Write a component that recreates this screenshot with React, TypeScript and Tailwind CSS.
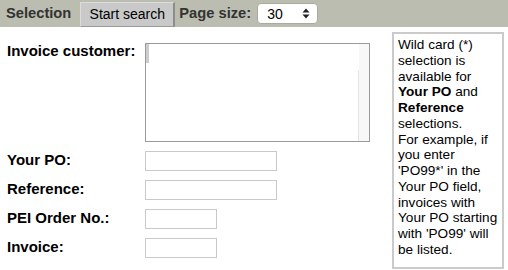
import React from "react";

export default function App() {
  return (
    <div className="w-[508px] h-[270px] bg-white overflow-hidden font-['Liberation_Sans',Arial,sans-serif] text-black">
      {/* header bar */}
      <div className="h-[27px] bg-[#babdb0] flex items-center">
        <span className="pl-[6px] text-[14.7px] leading-[17px] font-bold text-[#333]">Selection</span>
        <button className="ml-[9px] mt-[1px] h-[25px] w-[95px] bg-[#c9c9c9] border-t border-l border-[#dcdcdc] border-r-2 border-r-[#8c8c8c] border-b border-b-[#9a9a9a] text-[14px] leading-[16px] text-black flex items-center justify-center">
          Start search
        </button>
        <span className="ml-[4px] text-[14.7px] leading-[17px] font-bold text-[#333]">Page size:</span>
        <div className="ml-[6px] h-[21px] w-[61px] rounded-[4px] bg-white border border-[#a9ab9f] flex items-center pl-[9px] pr-[7px] text-[14px] text-black">
          <span className="flex-1 leading-[16px]">30</span>
          <svg width="8" height="11" viewBox="0 0 8 11" className="block">
            <polygon points="4,0.5 7.5,4.5 0.5,4.5" fill="#222" />
            <polygon points="0.5,6.5 7.5,6.5 4,10.5" fill="#222" />
          </svg>
        </div>
      </div>

      {/* main */}
      <div className="flex pt-[5px]">
        <div className="flex-1 pl-[7px] pt-[11px]">
          <div className="grid grid-cols-[138px_auto] gap-y-[9px] items-start">
            <span className="text-[15px] leading-[17px] font-bold -mt-[1px]">Invoice customer:</span>
            <div className="w-[225px] h-[99px] border border-[#9b9b9b] bg-white flex">
              <div className="w-[3px] h-[19px] bg-[#cdcdcd]" />
              <div className="flex-1" />
              <div className="w-[11px] flex flex-col bg-[#f8f8f8]">
                <div className="h-[26px] border-l border-white" />
                <div className="flex-1 border-l border-[#e4e4e4]" />
              </div>
            </div>

            <span className="text-[15px] leading-[17px] font-bold">Your PO:</span>
            <div className="w-[132px] h-[20px] border border-[#c9c9c9] bg-white" />

            <span className="text-[15px] leading-[17px] font-bold">Reference:</span>
            <div className="w-[132px] h-[20px] border border-[#c9c9c9] bg-white" />

            <span className="text-[15px] leading-[17px] font-bold">PEI Order No.:</span>
            <div className="w-[72px] h-[20px] border border-[#c9c9c9] bg-white" />

            <span className="text-[15px] leading-[17px] font-bold">Invoice:</span>
            <div className="w-[72px] h-[20px] border border-[#c9c9c9] bg-white" />
          </div>
        </div>

        <div className="w-[112px] mr-[4px] border-2 border-[#cacaca] pl-[4px] pr-[1px] pt-[3px] pb-[9px] text-[13.6px] leading-[15.75px] text-black">
          Wild card (*) selection is available for <b>Your PO</b> and <b>Reference</b> selections.
          <br />
          For example, if you enter 'PO99*' in the Your PO field, invoices with Your PO starting with 'PO99' will be listed.
        </div>
      </div>
    </div>
  );
}
